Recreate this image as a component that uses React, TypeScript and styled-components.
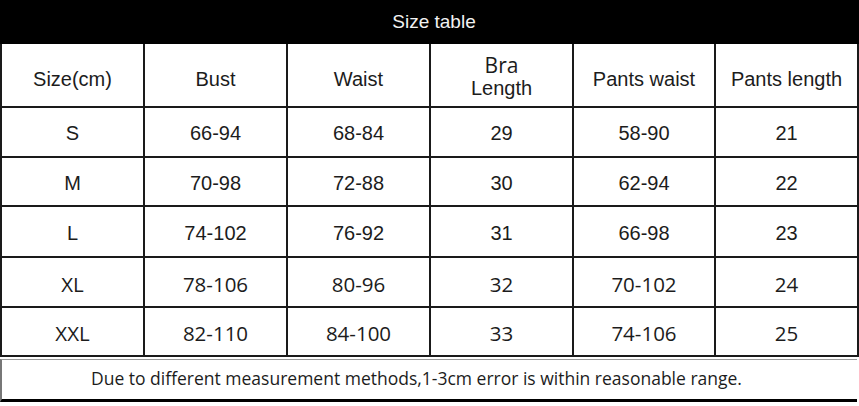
import styled, { createGlobalStyle } from "styled-components"

const GlobalStyle = createGlobalStyle`
	html, body {
		margin: 0;
		padding: 0;
		background: #fff;
	}
`

type Row = { size: string; values: string[]; alt?: boolean; height: number }

const headers = ["Size(cm)", "Bust", "Waist", "BRA", "Pants waist", "Pants length"]

const rows: Row[] = [
	{ size: "S", values: ["66-94", "68-84", "29", "58-90", "21"], height: 50 },
	{ size: "M", values: ["70-98", "72-88", "30", "62-94", "22"], height: 49 },
	{ size: "L", values: ["74-102", "76-92", "31", "66-98", "23"], height: 51 },
	{ size: "XL", values: ["78-106", "80-96", "32", "70-102", "24"], alt: true, height: 50 },
	{ size: "XXL", values: ["82-110", "84-100", "33", "74-106", "25"], alt: true, height: 49 },
]

export default function App() {
	return (
		<Page>
			<GlobalStyle />
			<Title>Size table</Title>
			<Grid>
				{headers.map(h =>
					h === "BRA" ? (
						<HeadCell key={h}>
							<Stack>
								<span className="bra">Bra</span>
								<span>Length</span>
							</Stack>
						</HeadCell>
					) : (
						<HeadCell key={h}>{h}</HeadCell>
					),
				)}
				{rows.map(r => (
					<>
						<Cell key={r.size} $alt={r.alt} $h={r.height}>
							{r.size}
						</Cell>
						{r.values.map((v, i) => (
							<Cell key={r.size + i} $alt={r.alt} $h={r.height}>
								{v}
							</Cell>
						))}
					</>
				))}
			</Grid>
			<Note>Due to different measurement methods,1-3cm error is within reasonable range.</Note>
		</Page>
	)
}

const Page = styled.div`
	width: 859px;
	height: 406px;
	background: #fff;
	overflow: hidden;
`
const Title = styled.div`
	height: 44px;
	background: #000;
	color: #f2f2f2;
	display: flex;
	align-items: center;
	justify-content: center;
	padding-left: 9px;
	box-sizing: border-box;
	font-family: "Liberation Sans", Arial, sans-serif;
	font-size: 19px;
`
const Grid = styled.div`
	display: grid;
	grid-template-columns: 143px 143px 143px 143px 142px 143px;
	width: 857px;
	border-left: 2px solid #1a1a1a;
	box-sizing: content-box;
`
const HeadCell = styled.div`
	height: 64px;
	box-sizing: border-box;
	border-right: 2px solid #1a1a1a;
	border-bottom: 2px solid #1a1a1a;
	display: flex;
	align-items: center;
	justify-content: center;
	padding-top: 8px;
	font-family: "Liberation Sans", Arial, sans-serif;
	font-size: 20px;
	color: #1c1c1c;
`
const Stack = styled.div`
	display: flex;
	flex-direction: column;
	align-items: center;
	gap: 2px;
	line-height: 20px;
	margin-top: -6px;
	.bra {
		font-family: "Open Sans", "Noto Sans", sans-serif;
		font-size: 21px;
		line-height: 22px;
	}
`
const Cell = styled.div<{ $alt?: boolean; $h: number }>`
	height: ${({ $h }) => $h}px;
	box-sizing: border-box;
	border-right: 2px solid #1a1a1a;
	border-bottom: 2px solid #1a1a1a;
	display: flex;
	align-items: center;
	justify-content: center;
	color: #1c1c1c;
	font-family: ${({ $alt }) => ($alt ? `"Open Sans", "Noto Sans", sans-serif` : `"Liberation Sans", Arial, sans-serif`)};
	font-size: ${({ $alt }) => ($alt ? "20.5px" : "20px")};
	padding-top: 3px;
`
const Note = styled.div`
	margin-top: 2px;
	height: 43px;
	width: 857px;
	box-sizing: border-box;
	border-top: 1px solid #999;
	border-left: 2px solid #777;
	border-bottom: 3px solid #000;
	display: flex;
	align-items: center;
	padding-left: 89px;
	padding-bottom: 3px;
	font-family: "Open Sans", "Noto Sans", sans-serif;
	font-size: 17.5px;
	color: #1c1c1c;
`
